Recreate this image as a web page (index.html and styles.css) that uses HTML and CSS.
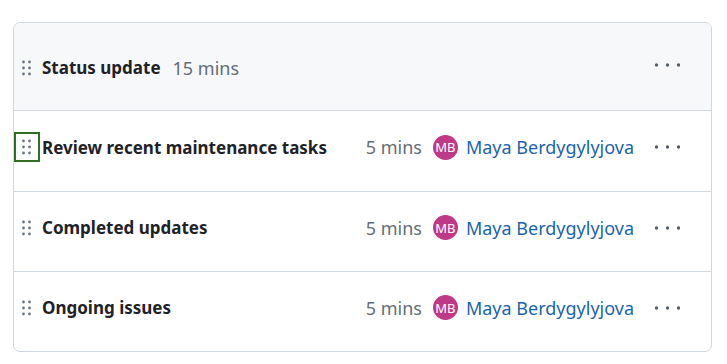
FILE: index.html
```html
<!DOCTYPE html>
<html lang="en">
<head>
    <meta charset="UTF-8">
    <meta name="viewport" content="width=device-width, initial-scale=1.0">
    <title>Agenda</title>
    <link rel="stylesheet" href="styles.css">
</head>
<body>

    <div class="agenda">
        <!-- Section header -->
        <div class="agenda-header">
            <span class="grabber">
                <svg width="12" height="18" viewBox="0 0 12 18"><circle cx="2.5" cy="3" r="1.4"/><circle cx="8.5" cy="3" r="1.4"/><circle cx="2.5" cy="9" r="1.4"/><circle cx="8.5" cy="9" r="1.4"/><circle cx="2.5" cy="15" r="1.4"/><circle cx="8.5" cy="15" r="1.4"/></svg>
            </span>
            <span class="section-title">Status update</span>
            <span class="section-time">15 mins</span>
            <button class="more-btn" aria-label="More">
                <svg width="26" height="6" viewBox="0 0 26 6"><circle cx="2.5" cy="3" r="1.7"/><circle cx="13.5" cy="3" r="1.7"/><circle cx="24.5" cy="3" r="1.7"/></svg>
            </button>
        </div>

        <div class="agenda-item">
            <span class="grabber focused">
                <svg width="12" height="18" viewBox="0 0 12 18"><circle cx="2.5" cy="3" r="1.4"/><circle cx="8.5" cy="3" r="1.4"/><circle cx="2.5" cy="9" r="1.4"/><circle cx="8.5" cy="9" r="1.4"/><circle cx="2.5" cy="15" r="1.4"/><circle cx="8.5" cy="15" r="1.4"/></svg>
            </span>
            <span class="item-title">Review recent maintenance tasks</span>
            <span class="item-time">5 mins</span>
            <span class="avatar">MB</span>
            <a class="owner" href="#">Maya Berdygylyjova</a>
            <button class="more-btn" aria-label="More">
                <svg width="26" height="6" viewBox="0 0 26 6"><circle cx="2.5" cy="3" r="1.7"/><circle cx="13.5" cy="3" r="1.7"/><circle cx="24.5" cy="3" r="1.7"/></svg>
            </button>
        </div>

        <div class="agenda-item">
            <span class="grabber">
                <svg width="12" height="18" viewBox="0 0 12 18"><circle cx="2.5" cy="3" r="1.4"/><circle cx="8.5" cy="3" r="1.4"/><circle cx="2.5" cy="9" r="1.4"/><circle cx="8.5" cy="9" r="1.4"/><circle cx="2.5" cy="15" r="1.4"/><circle cx="8.5" cy="15" r="1.4"/></svg>
            </span>
            <span class="item-title">Completed updates</span>
            <span class="item-time">5 mins</span>
            <span class="avatar">MB</span>
            <a class="owner" href="#">Maya Berdygylyjova</a>
            <button class="more-btn" aria-label="More">
                <svg width="26" height="6" viewBox="0 0 26 6"><circle cx="2.5" cy="3" r="1.7"/><circle cx="13.5" cy="3" r="1.7"/><circle cx="24.5" cy="3" r="1.7"/></svg>
            </button>
        </div>

        <div class="agenda-item">
            <span class="grabber">
                <svg width="12" height="18" viewBox="0 0 12 18"><circle cx="2.5" cy="3" r="1.4"/><circle cx="8.5" cy="3" r="1.4"/><circle cx="2.5" cy="9" r="1.4"/><circle cx="8.5" cy="9" r="1.4"/><circle cx="2.5" cy="15" r="1.4"/><circle cx="8.5" cy="15" r="1.4"/></svg>
            </span>
            <span class="item-title">Ongoing issues</span>
            <span class="item-time">5 mins</span>
            <span class="avatar">MB</span>
            <a class="owner" href="#">Maya Berdygylyjova</a>
            <button class="more-btn" aria-label="More">
                <svg width="26" height="6" viewBox="0 0 26 6"><circle cx="2.5" cy="3" r="1.7"/><circle cx="13.5" cy="3" r="1.7"/><circle cx="24.5" cy="3" r="1.7"/></svg>
            </button>
        </div>
    </div>

</body>
</html>
```

FILE: styles.css
```css
/* Basic Reset */
* {
    margin: 0;
    padding: 0;
    box-sizing: border-box;
}

body {
    font-family: 'Noto Sans', 'Open Sans', sans-serif;
    background-color: #fff;
    color: #1f2328;
    padding: 22px 15px 0 13px;
}

.agenda {
    width: 699px;
    border: 1px solid #d0d7de;
    border-radius: 7px;
    overflow: hidden;
}

.agenda-header,
.agenda-item {
    display: flex;
    align-items: center;
    padding: 0 28px 0 0;
}

.agenda-header {
    height: 88px;
    background-color: #f6f8fa;
    border-bottom: 1px solid #d0d7de;
    padding-top: 2px;
}

.agenda-header .more-btn {
    margin-bottom: 5px;
}

.agenda-item {
    height: 80px;
    padding-bottom: 8px;
}

.agenda-item + .agenda-item {
    border-top: 1px solid #d0d7de;
}

.grabber {
    width: 26px;
    height: 30px;
    display: flex;
    align-items: center;
    justify-content: center;
    margin-right: 2px;
    border: 2px solid transparent;
}

.grabber svg {
    fill: #6e7781;
}

.grabber.focused {
    border-color: #2f6f24;
}

.section-title {
    font-size: 17px;
    font-weight: 700;
}

.section-time {
    font-size: 18px;
    color: #656d76;
    margin-left: 12px;
    flex: 1;
}

.item-title {
    font-size: 17px;
    font-weight: 700;
    flex: 1;
}

.item-time {
    font-size: 18px;
    color: #656d76;
}

.avatar {
    width: 25px;
    height: 25px;
    border-radius: 50%;
    background-color: #bf3989;
    color: #fff;
    font-size: 13px;
    display: flex;
    align-items: center;
    justify-content: center;
    margin-left: 11px;
    margin-right: 8px;
}

.owner {
    font-size: 18px;
    color: #1b64ad;
    text-decoration: none;
}

.more-btn {
    width: 32px;
    height: 28px;
    margin-left: 17px;
    background: none;
    border: none;
    display: flex;
    align-items: center;
    justify-content: center;
    cursor: pointer;
}

.more-btn svg {
    fill: #57606a;
}
```
